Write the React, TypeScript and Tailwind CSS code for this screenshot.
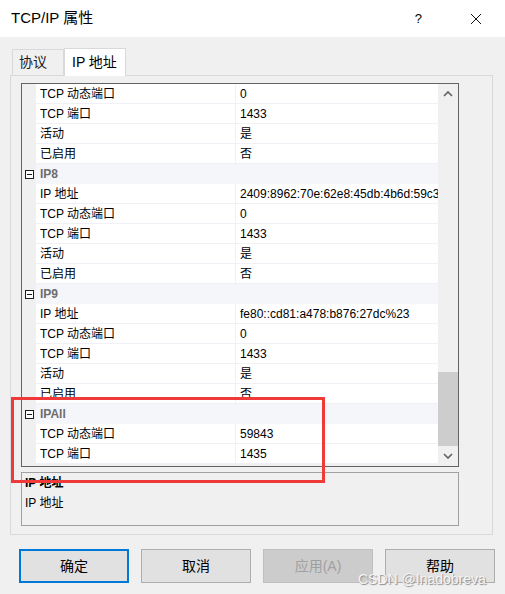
import React from 'react';

type Row = { cat?: string; name?: string; value?: string };

const rows: Row[] = [
  { name: 'TCP 动态端口', value: '0' },
  { name: 'TCP 端口', value: '1433' },
  { name: '活动', value: '是' },
  { name: '已启用', value: '否' },
  { cat: 'IP8' },
  { name: 'IP 地址', value: '2409:8962:70e:62e8:45db:4b6d:59c3:ec1a' },
  { name: 'TCP 动态端口', value: '0' },
  { name: 'TCP 端口', value: '1433' },
  { name: '活动', value: '是' },
  { name: '已启用', value: '否' },
  { cat: 'IP9' },
  { name: 'IP 地址', value: 'fe80::cd81:a478:b876:27dc%23' },
  { name: 'TCP 动态端口', value: '0' },
  { name: 'TCP 端口', value: '1433' },
  { name: '活动', value: '是' },
  { name: '已启用', value: '否' },
  { cat: 'IPAll' },
  { name: 'TCP 动态端口', value: '59843' },
  { name: 'TCP 端口', value: '1435' },
];

function MinusBox() {
  return (
    <svg width="9" height="9" viewBox="0 0 9 9" className="block">
      <rect x="0.5" y="0.5" width="8" height="8" fill="#ffffff" stroke="#1e1e1e" />
      <line x1="2" y1="4.5" x2="7" y2="4.5" stroke="#1e1e1e" />
    </svg>
  );
}

function GridRow({ row }: { row: Row }) {
  if (row.cat) {
    return (
      <div className="flex h-[20px]">
        <div className="w-[14px] bg-[#f0f0f0] flex items-center justify-center pl-[1px]">
          <MinusBox />
        </div>
        <div className="flex-1 bg-[#f5f6fa] flex items-center pl-[4px] font-bold text-[#6d6d6d]">{row.cat}</div>
      </div>
    );
  }
  return (
    <div className="flex h-[20px]">
      <div className="w-[14px] bg-[#f0f0f0]" />
      <div className="w-[200px] bg-white border-b border-r border-[#f0f0f6] flex items-center pl-[4px] whitespace-nowrap">
        {row.name}
      </div>
      <div className="flex-1 bg-white border-b border-[#f0f0f6] flex items-center pl-[4px] whitespace-nowrap overflow-hidden">
        {row.value}
      </div>
    </div>
  );
}

function Chevron({ up }: { up?: boolean }) {
  return (
    <svg width="10" height="6" viewBox="0 0 10 6" className="block">
      <path
        d={up ? 'M1 5 L5 1 L9 5' : 'M1 1 L5 5 L9 1'}
        fill="none"
        stroke="#606060"
        strokeWidth="1.6"
      />
    </svg>
  );
}

function Button({ label, kind }: { label: string; kind?: 'default' | 'disabled' }) {
  const base = 'w-[110px] h-[34px] flex items-center justify-center text-[14px]';
  if (kind === 'default') {
    return <div className={`${base} bg-[#e1e1e1] border-2 border-[#0078d7] text-black`}>{label}</div>;
  }
  if (kind === 'disabled') {
    return <div className={`${base} bg-[#cccccc] border border-[#bfbfbf] text-[#a0a0a0]`}>{label}</div>;
  }
  return <div className={`${base} bg-[#e1e1e1] border border-[#adadad] text-black`}>{label}</div>;
}

export default function App() {
  return (
    <div
      className="relative w-[505px] h-[594px] bg-[#f0f0f0] overflow-hidden text-black"
      style={{ fontFamily: '"Liberation Sans", "Noto Sans CJK SC", sans-serif' }}
    >
      {/* title bar */}
      <div className="h-[37px] bg-white flex items-center pl-[11px]">
        <span className="text-[15px]">TCP/IP 属性</span>
        <span className="ml-auto text-[13px] mr-[48px]">?</span>
        <svg width="12" height="12" viewBox="0 0 12 12" className="mr-[23px]">
          <path d="M1 1 L11 11 M11 1 L1 11" stroke="#111" strokeWidth="1" />
        </svg>
      </div>

      {/* tabs */}
      <div className="flex items-end pl-[12px] mt-[10px] h-[28px]">
        <div className="w-[52px] h-[26px] border border-b-0 border-[#d9d9d9] flex items-center pl-[6px] text-[14px] text-[#1a1a1a]">
          协议
        </div>
        <div className="relative z-10 w-[62px] h-[28px] -mb-px bg-white border border-b-0 border-[#d9d9d9] flex items-center pl-[7px] text-[14px]">
          IP 地址
        </div>
      </div>

      {/* tab panel */}
      <div className="ml-[10px] w-[483px] h-[460px] border border-[#d9d9d9] pt-[7px] pl-[10px]">
        <div className="w-[438px] h-[384px] border border-[#646464] flex text-[12px]">
          <div className="flex-1 flex flex-col overflow-hidden">
            {rows.map((r, i) => (
              <GridRow key={i} row={r} />
            ))}
          </div>
          <div className="w-[20px] bg-[#f0f0f0] flex flex-col">
            <div className="h-[20px] flex items-center justify-center">
              <Chevron up />
            </div>
            <div className="flex-1 flex flex-col justify-end">
              <div className="h-[74px] bg-[#cdcdcd]" />
            </div>
            <div className="h-[20px] flex items-center justify-center">
              <Chevron />
            </div>
          </div>
        </div>

        <div className="mt-[5px] w-[438px] h-[54px] border border-[#a0a0a0] pl-[3px] pt-[1px] text-[12px] flex flex-col">
          <div className="h-[18px] flex items-center font-bold">IP 地址</div>
          <div className="h-[22px] flex items-center">IP 地址</div>
        </div>
      </div>

      {/* buttons */}
      <div className="flex gap-[12px] pl-[19px] mt-[14px]">
        <Button label="确定" kind="default" />
        <Button label="取消" />
        <Button label="应用(A)" kind="disabled" />
        <Button label="帮助" />
      </div>

      {/* annotation */}
      <div className="absolute left-[11px] top-[397px] w-[314px] h-[86px] border-[3px] border-[#f03a3a]" />

      {/* watermark */}
      <div className="absolute left-[358px] top-[569px] text-[14px] text-[#f4f4f4] [text-shadow:1px_1px_1px_#8a8a8a]">
        CSDN @Inadobreva
      </div>
    </div>
  );
}
